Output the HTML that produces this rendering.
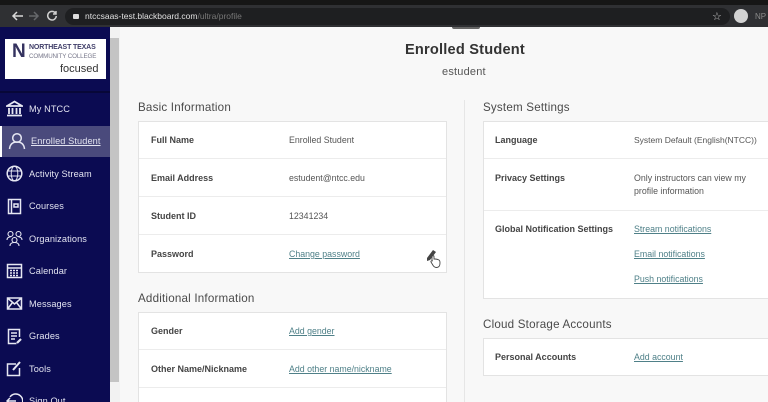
<!DOCTYPE html>
<html><head><meta charset="utf-8"><style>
*{box-sizing:border-box}
html,body{margin:0;padding:0;width:768px;height:402px;overflow:hidden;background:#f8f8f8}
#w{position:absolute;left:0;top:0;width:768px;height:402px;overflow:hidden;background:#f8f8f8;font-family:"Liberation Sans",sans-serif;color:#3a3a3a;filter:blur(.35px)}
.a{position:absolute;white-space:nowrap}
.card{position:absolute;background:#fff;border:1px solid #e3e3e3}
.sep{position:absolute;height:1px;background:#ececec}
.k{position:absolute;white-space:nowrap;font-size:9px;font-weight:700;color:#444}
.v{position:absolute;white-space:nowrap;font-size:8.8px;color:#555}
.l{position:absolute;white-space:nowrap;font-size:8.8px;color:#4f8088;text-decoration:underline}
.h{position:absolute;white-space:nowrap;font-size:11.6px;color:#4a4a4a;letter-spacing:.2px}
.n{position:absolute;left:29px;white-space:nowrap;font-size:9.2px;color:#e2e3f0;letter-spacing:.1px}
svg.i{position:absolute;left:6px;width:17px;height:17px;fill:none;stroke:#e6e7f2;stroke-width:1.5}
</style></head><body><div id="w">
<div class="a" style="left:0;top:0;width:768px;height:5px;background:#161616"></div>
<div class="a" style="left:0;top:5px;width:768px;height:22px;background:#2f3033"></div>
<div class="a" style="left:65px;top:8px;width:665px;height:17px;border-radius:9px;background:#1e1f21"></div>
<svg class="a" style="left:7px;top:9px" width="34" height="14" fill="none" stroke-width="1.5"><path d="M16 7H6M10 3L6 7l4 4" stroke="#d8d8d8"/><path d="M22 7h8M27 3l4 4-4 4" stroke="#66686b"/></svg>
<svg class="a" style="left:46px;top:10px" width="12" height="12" fill="none" stroke="#d0d0d0" stroke-width="1.5"><path d="M9.5 3.2A4.3 4.3 0 1 0 10.300 6M10 1v3H7"/></svg>
<div class="a" style="left:73px;top:14px;width:6px;height:5px;background:#ddd;border-radius:1px"></div>
<div class="a" style="left:85px;top:11px;font-size:8.500px;color:#e0e0e0">ntccsaas-test.blackboard.com<span style="color:#777">/ultra/profile</span></div>
<div class="a" style="left:712px;top:10px;font-size:11px;color:#ccc">☆</div>
<div class="a" style="left:734px;top:9px;width:14px;height:14px;border-radius:50%;background:#d3d3d3"></div>
<div class="a" style="left:755px;top:12px;font-size:8px;color:#8a8a8a">NP</div>

<div class="a" style="left:110px;top:27px;width:10px;height:375px;background:#f2f2f2"></div>
<div class="a" style="left:110px;top:38px;width:9px;height:344px;background:#c4c4c4"></div>

<div class="a" style="left:0;top:27px;width:110px;height:375px;background:#0b0b52"></div>
<div class="a" style="left:0;top:91px;width:110px;height:2px;background:#070738"></div>
<div class="a" style="left:5px;top:39px;width:101px;height:40px;background:#fff"></div>
<div class="a" style="left:12px;top:41px;font-size:19px;font-weight:700;color:#34325f">N</div>
<div class="a" style="left:29px;top:44px;font-size:7px;color:#3f3d68;font-weight:700;letter-spacing:-.15px">NORTHEAST TEXAS</div>
<div class="a" style="left:29px;top:52.500px;font-size:6.200px;color:#77778a;letter-spacing:-.1px">COMMUNITY COLLEGE</div>
<div class="a" style="left:60px;top:63px;font-size:11px;color:#333">focused</div>

<div class="a" style="left:0;top:126px;width:110px;height:31px;background:#4a4a7c"></div>
<div class="a" style="left:0;top:126px;width:2px;height:31px;background:#fff"></div>

<svg class="i" style="top:100px" viewBox="0 0 17 17"><path d="M1 6L8.500 1.500 16 6zM1 15.500h15M3 14V8M6.500 14V8M10.500 14V8M14 14V8" stroke-width="1.800"/></svg>
<div class="n" style="top:104px">My NTCC</div>
<svg class="i" style="left:8px;top:132px;width:18px;height:18px" viewBox="0 0 18 18"><circle cx="9" cy="6" r="4.300"/><path d="M1.500 17c.5-5 3-7 7.500-7s7 2 7.500 7"/></svg>
<div class="n" style="left:31px;top:136px;text-decoration:underline">Enrolled Student</div>
<svg class="i" style="top:165px" viewBox="0 0 17 17"><circle cx="8.500" cy="8.500" r="7.300"/><ellipse cx="8.500" cy="8.500" rx="3.300" ry="7.300" stroke-width="1"/><path d="M1.500 6h14M1.500 11h14" stroke-width="1"/></svg>
<div class="n" style="top:169px">Activity Stream</div>
<svg class="i" style="top:198px" viewBox="0 0 17 17"><path d="M2.500 1.500h12v14h-12zM5.500 1.500v14M8 6h4v3H8z"/></svg>
<div class="n" style="top:201px">Courses</div>
<svg class="i" style="top:230px" viewBox="0 0 17 17"><circle cx="4.500" cy="4" r="2.500" stroke-width="1.100"/><circle cx="12.500" cy="4" r="2.500" stroke-width="1.100"/><circle cx="8.500" cy="10" r="2.500" stroke-width="1.100"/><path d="M1 10c0-2 1-3 3.500-3M16 10c0-2-1-3-3.500-3M4 16c0-2.500 2-3.500 4.500-3.500S13 13.500 13 16" stroke-width="1.100"/></svg>
<div class="n" style="top:234px">Organizations</div>
<svg class="i" style="top:262px" viewBox="0 0 17 17"><path d="M1.500 2.500h14v13h-14zM1.500 6h14"/><path d="M4 8.500h9M4 11h9M4 13.500h9" stroke-dasharray="2 1"/></svg>
<div class="n" style="top:266px">Calendar</div>
<svg class="i" style="top:295px" viewBox="0 0 17 17"><path d="M1.500 3h14v11h-14zM1.500 3l7 6 7-6M1.500 14l5-6.500M15.500 14l-5-6.500"/></svg>
<div class="n" style="top:299px">Messages</div>
<svg class="i" style="top:328px" viewBox="0 0 17 17"><path d="M13.500 9V1.500h-11v14h8M5 5h6M5 8h6M5 11h4"/><path d="M11 15l4-4" stroke-width="2.200"/></svg>
<div class="n" style="top:331px">Grades</div>
<svg class="i" style="top:360px" viewBox="0 0 17 17"><path d="M10 4H1.500v11.500h12V8"/><path d="M7 10l7-8" stroke-width="2"/></svg>
<div class="n" style="top:364px">Tools</div>
<svg class="i" style="top:392px" viewBox="0 0 17 17"><path d="M4 5a7 7 0 1 1 0 8M1 9h9M4 6L1 9l3 3"/></svg>
<div class="n" style="top:396px">Sign Out</div>

<div class="a" style="left:452px;top:27px;width:28px;height:2px;background:#666;border-radius:0 0 14px 14px"></div>
<div class="a" style="left:405px;top:42px;font-size:14.600px;font-weight:700;color:#333;letter-spacing:.2px">Enrolled Student</div>
<div class="a" style="left:442px;top:66px;font-size:11px;color:#555;letter-spacing:.2px">estudent</div>
<div class="a" style="left:464px;top:100px;width:1px;height:302px;background:#e6e6e6"></div>

<div class="h" style="left:138px;top:101px">Basic Information</div>
<div class="card" style="left:138px;top:121px;width:309px;height:152px"></div>
<div class="sep" style="left:139px;top:158px;width:307px"></div>
<div class="sep" style="left:139px;top:196px;width:307px"></div>
<div class="sep" style="left:139px;top:234px;width:307px"></div>
<div class="k" style="left:151px;top:135px">Full Name</div><div class="v" style="left:289px;top:135px">Enrolled Student</div>
<div class="k" style="left:151px;top:173px">Email Address</div><div class="v" style="left:289px;top:173px">estudent@ntcc.edu</div>
<div class="k" style="left:151px;top:211px">Student ID</div><div class="v" style="left:289px;top:211px">12341234</div>
<div class="k" style="left:151px;top:249px">Password</div><div class="l" style="left:289px;top:249px">Change password</div>
<svg class="a" style="left:426px;top:248px" width="16" height="21" viewBox="0 0 16 21"><path d="M1 10l6-8 3 2-6 8-3 1z" fill="#444"/><path d="M6 12V8.500c0-1 2-1 2 0V11h1c1 0 3 .5 4 1 1 .5 1 2 1 3 0 3-1 4.500-3.500 4.500-2 0-3-1-4-3l-1.500-2.500c-.5-1 .8-1.500 1.500-.8z" fill="#fff" stroke="#444" stroke-width=".9"/></svg>

<div class="h" style="left:138px;top:292px">Additional Information</div>
<div class="card" style="left:138px;top:312px;width:309px;height:100px"></div>
<div class="sep" style="left:139px;top:349px;width:307px"></div>
<div class="sep" style="left:139px;top:387px;width:307px"></div>
<div class="k" style="left:151px;top:326px">Gender</div><div class="l" style="left:289px;top:326px">Add gender</div>
<div class="k" style="left:151px;top:364px">Other Name/Nickname</div><div class="l" style="left:289px;top:364px">Add other name/nickname</div>

<div class="h" style="left:483px;top:101px">System Settings</div>
<div class="card" style="left:483px;top:121px;width:300px;height:178px"></div>
<div class="sep" style="left:484px;top:158px;width:284px"></div>
<div class="sep" style="left:484px;top:210px;width:284px"></div>
<div class="k" style="left:495px;top:135px">Language</div><div class="v" style="left:634px;top:135px;font-size:8.500px">System Default (English(NTCC))</div>
<div class="k" style="left:495px;top:173px">Privacy Settings</div><div class="v" style="left:634px;top:173px">Only instructors can view my</div><div class="v" style="left:634px;top:186px">profile information</div>
<div class="k" style="left:495px;top:224px">Global Notification Settings</div>
<div class="l" style="left:634px;top:224px">Stream notifications</div>
<div class="l" style="left:634px;top:249px">Email notifications</div>
<div class="l" style="left:634px;top:274px">Push notifications</div>

<div class="h" style="left:483px;top:318px">Cloud Storage Accounts</div>
<div class="card" style="left:483px;top:338px;width:300px;height:38px"></div>
<div class="k" style="left:495px;top:352px">Personal Accounts</div><div class="l" style="left:634px;top:352px">Add account</div>
</div></body></html>
